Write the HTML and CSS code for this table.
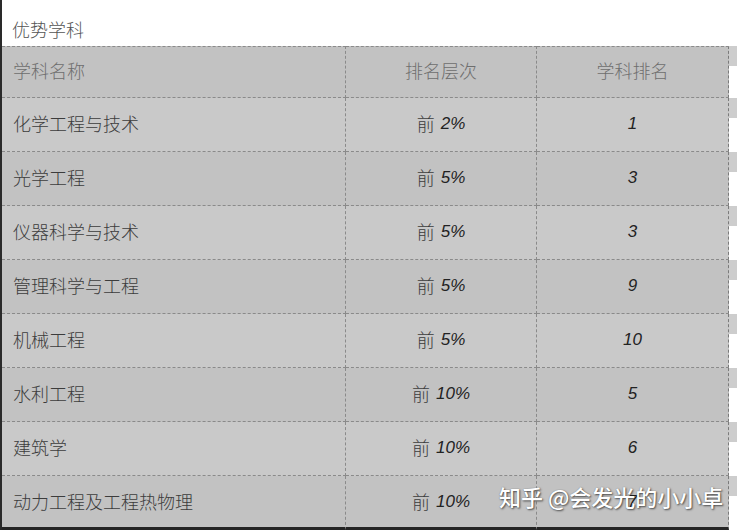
FILE: index.html
```html
<!DOCTYPE html>
<html lang="zh">
<head>
<meta charset="utf-8">
<link rel="stylesheet" href="styles.css">
</head>
<body>
<div class="page">
  <div class="title">优势学科</div>
  <div class="table">
    <div class="row head dark">
      <div class="cell name">学科名称</div>
      <div class="cell mid">排名层次</div>
      <div class="cell mid last">学科排名</div>
      <div class="stub"></div>
    </div>
    <div class="row light">
      <div class="cell name">化学工程与技术</div>
      <div class="cell mid">前<span class="num">2%</span></div>
      <div class="cell mid last"><span class="num">1</span></div>
      <div class="stub"></div>
    </div>
    <div class="row dark">
      <div class="cell name">光学工程</div>
      <div class="cell mid">前<span class="num">5%</span></div>
      <div class="cell mid last"><span class="num">3</span></div>
      <div class="stub"></div>
    </div>
    <div class="row light">
      <div class="cell name">仪器科学与技术</div>
      <div class="cell mid">前<span class="num">5%</span></div>
      <div class="cell mid last"><span class="num">3</span></div>
      <div class="stub"></div>
    </div>
    <div class="row dark">
      <div class="cell name">管理科学与工程</div>
      <div class="cell mid">前<span class="num">5%</span></div>
      <div class="cell mid last"><span class="num">9</span></div>
      <div class="stub"></div>
    </div>
    <div class="row light">
      <div class="cell name">机械工程</div>
      <div class="cell mid">前<span class="num">5%</span></div>
      <div class="cell mid last"><span class="num">10</span></div>
      <div class="stub"></div>
    </div>
    <div class="row dark">
      <div class="cell name">水利工程</div>
      <div class="cell mid">前<span class="num">10%</span></div>
      <div class="cell mid last"><span class="num">5</span></div>
      <div class="stub"></div>
    </div>
    <div class="row light">
      <div class="cell name">建筑学</div>
      <div class="cell mid">前<span class="num">10%</span></div>
      <div class="cell mid last"><span class="num">6</span></div>
      <div class="stub"></div>
    </div>
    <div class="row dark final">
      <div class="cell name">动力工程及工程热物理</div>
      <div class="cell mid">前<span class="num">10%</span></div>
      <div class="cell mid last"><span class="num">7</span></div>
      <div class="stub"></div>
    </div>
  </div>
  <div class="watermark">知乎 @会发光的小小卓</div>
</div>
</body>
</html>
```
FILE: styles.css
```css
html, body {
  margin: 0;
  padding: 0;
  background: #ffffff;
}
body {
  width: 737px;
  height: 530px;
  overflow: hidden;
  font-family: "Noto Sans CJK SC", "Noto Sans", sans-serif;
}
.page {
  position: relative;
  height: 530px;
  border-left: 2px solid #2a2a2a;
  box-sizing: border-box;
}
.title {
  height: 46px;
  box-sizing: border-box;
  padding: 17px 0 0 10px;
  font-size: 18px;
  line-height: 24px;
  color: #555;
  font-weight: 300;
}
.table {
  display: flex;
  flex-direction: column;
}
.row {
  display: grid;
  grid-template-columns: 344px 191px 192px 8px;
  height: 54px;
  box-sizing: border-box;
}
.row.head {
  height: 52px;
}
.row .cell {
  display: flex;
  align-items: center;
  box-sizing: border-box;
  padding-bottom: 4px;
  border-bottom: 1px dashed #8a8a8a;
  border-right: 1px dashed #8a8a8a;
  font-size: 18px;
  line-height: 24px;
  color: #3c3c3c;
  font-weight: 300;
}
.row.head .cell {
  border-top: 1px dashed #8a8a8a;
  color: #6e6e6e;
}
.row.dark .cell { background: #c2c2c2; }
.row.light .cell { background: #c9c9c9; }
.row.final .cell {
  border-bottom: 3px solid #252525;
  padding-bottom: 2px;
}
.cell.name {
  padding-left: 11px;
}
.cell.mid {
  justify-content: center;
}
.cell.last {
  border-right: 1px dashed #7a7a7a;
}
.num {
  font-family: "Liberation Sans", sans-serif;
  font-style: italic;
  font-size: 17px;
  color: #222;
  margin-left: 6px;
  position: relative;
  top: 1px;
}
.cell.last .num { margin-left: 0; }
.stub {
  height: 20px;
  background: #cdcdcd;
}
.watermark {
  position: absolute;
  left: 497px;
  top: 482px;
  font-size: 22px;
  line-height: 28px;
  font-weight: 500;
  color: #ffffff;
  text-shadow: 1px 1px 2px rgba(0,0,0,0.6), 0 0 1px rgba(0,0,0,0.4);
  white-space: nowrap;
}
```
